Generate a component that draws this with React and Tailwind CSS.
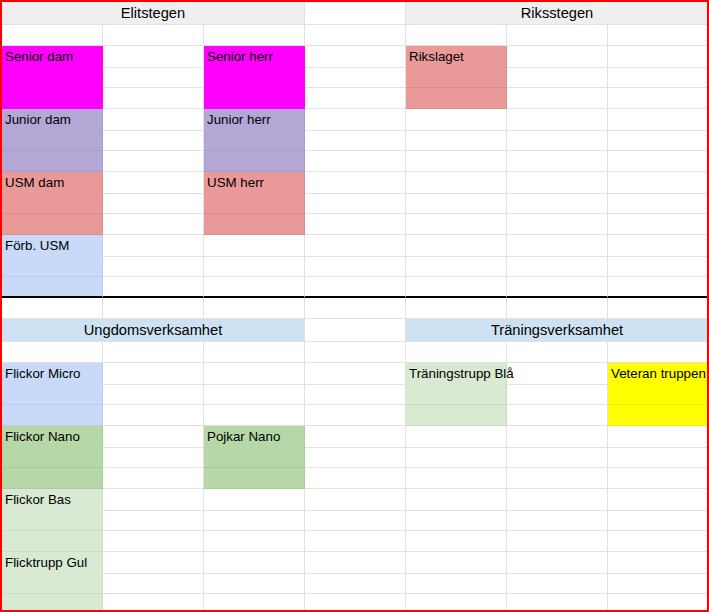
import clsx from "clsx";

const MAGENTA = { bg: "bg-[#ff00ff]", r: "border-r-[#ff00ff]", b: "border-b-[#ff00ff]" };
const LAVENDER = { bg: "bg-[#b4a7d6]", r: "border-r-[#a99cca]", b: "border-b-[#a99cca]" };
const SALMON = { bg: "bg-[#ea9999]", r: "border-r-[#db8e8e]", b: "border-b-[#db8e8e]" };
const LIGHTBLUE = { bg: "bg-[#c9daf8]", r: "border-r-[#bccdea]", b: "border-b-[#bccdea]" };
const GREEN = { bg: "bg-[#b6d7a8]", r: "border-r-[#aacb9c]", b: "border-b-[#aacb9c]" };
const LIGHTGREEN = { bg: "bg-[#d9ead3]", r: "border-r-[#cbdcc5]", b: "border-b-[#cbdcc5]" };
const YELLOW = { bg: "bg-[#ffff00]", r: "border-r-[#eeee10]", b: "border-b-[#eeee10]" };

const topBlocks = [
  { col: 0, row: 1, label: "Senior dam", ...MAGENTA },
  { col: 2, row: 1, label: "Senior herr", ...MAGENTA },
  { col: 4, row: 1, label: "Rikslaget", ...SALMON },
  { col: 0, row: 4, label: "Junior dam", ...LAVENDER },
  { col: 2, row: 4, label: "Junior herr", ...LAVENDER },
  { col: 0, row: 7, label: "USM dam", ...SALMON },
  { col: 2, row: 7, label: "USM herr", ...SALMON },
  { col: 0, row: 10, label: "Förb. USM", ...LIGHTBLUE },
];

const bottomBlocks = [
  { col: 0, row: 1, label: "Flickor Micro", ...LIGHTBLUE },
  { col: 4, row: 1, label: "Träningstrupp Blå", ...LIGHTGREEN },
  { col: 6, row: 1, label: "Veteran truppen", ...YELLOW },
  { col: 0, row: 4, label: "Flickor Nano", ...GREEN },
  { col: 2, row: 4, label: "Pojkar Nano", ...GREEN },
  { col: 0, row: 7, label: "Flickor Bas", ...LIGHTGREEN },
  { col: 0, row: 10, label: "Flicktrupp Gul", ...LIGHTGREEN },
];

const findBlock = (blocks, row, col) =>
  blocks.find((b) => b.col === col && row >= b.row && row < b.row + 3);

function Row({ blocks, row, thick }) {
  return (
    <div className="grid h-[21px] grid-cols-[repeat(7,101px)]">
      {Array.from({ length: 7 }, (_, col) => {
        const block = findBlock(blocks, row, col);
        return (
          <div
            key={col}
            className={clsx(
              "relative border-r",
              thick ? "border-b-2 border-b-black" : "border-b",
              block
                ? [block.bg, block.r, !thick && block.b]
                : ["border-r-[#e2e2e2]", !thick && "border-b-[#e2e2e2]"]
            )}
          >
            {block && block.row === row && (
              <span className="relative z-10 block whitespace-nowrap pl-[3px] pt-[1px] text-[13.33px] leading-[20px]">
                {block.label}
              </span>
            )}
          </div>
        );
      })}
    </div>
  );
}

function HeaderRow({ left, right, bg }) {
  return (
    <div className="grid h-[23px] grid-cols-[repeat(7,101px)]">
      <div className={clsx("col-span-3 border-r border-b border-r-[#e2e2e2] border-b-[#e2e2e2] text-center text-[14.67px] leading-[22px]", bg)}>
        {left}
      </div>
      <div className="border-r border-b border-r-[#e2e2e2] border-b-[#e2e2e2]" />
      <div className={clsx("col-span-3 border-r border-b border-r-[#e2e2e2] border-b-[#e2e2e2] text-center text-[14.67px] leading-[22px]", bg)}>
        {right}
      </div>
    </div>
  );
}

export default function App() {
  return (
    <div className="h-[612px] w-[709px] overflow-hidden border-2 border-[#ff0000] bg-white font-['Liberation_Sans',Arial,sans-serif] text-black">
      <HeaderRow left="Elitstegen" right="Riksstegen" bg="bg-[#efefef]" />
      {Array.from({ length: 13 }, (_, i) => (
        <Row key={i} blocks={topBlocks} row={i} thick={i === 12} />
      ))}
      <Row blocks={[]} row={0} />
      <HeaderRow left="Ungdomsverksamhet" right="Träningsverksamhet" bg="bg-[#cfe2f3]" />
      {Array.from({ length: 13 }, (_, i) => (
        <Row key={i} blocks={bottomBlocks} row={i} />
      ))}
    </div>
  );
}
